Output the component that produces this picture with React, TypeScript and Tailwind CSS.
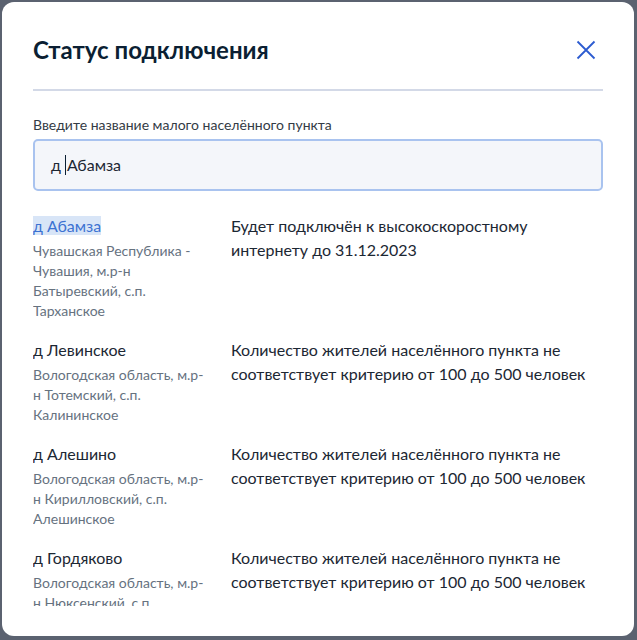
import React from "react";

const rows = [
  {
    name: "д Абамза",
    region: "Чувашская Республика - Чувашия, м.р-н Батыревский, с.п. Тарханское",
    status: "Будет подключён к высокоскоростному интернету до 31.12.2023",
    active: true,
  },
  {
    name: "д Левинское",
    region: "Вологодская область, м.р-н Тотемский, с.п. Калининское",
    status: "Количество жителей населённого пункта не соответствует критерию от 100 до 500 человек",
  },
  {
    name: "д Алешино",
    region: "Вологодская область, м.р-н Кирилловский, с.п. Алешинское",
    status: "Количество жителей населённого пункта не соответствует критерию от 100 до 500 человек",
  },
  {
    name: "д Гордяково",
    region: "Вологодская область, м.р-н Нюксенский, с.п. Нюксенское",
    status: "Количество жителей населённого пункта не соответствует критерию от 100 до 500 человек",
  },
];

export default function App() {
  return (
    <div
      className="w-[637px] h-[640px] bg-[#5b6270] p-[2px] pr-[3px] pb-[4px]"
      style={{ fontFamily: "Lato, 'Noto Sans', sans-serif" }}
    >
      <div className="w-full h-full bg-white rounded-[12px] px-[31px] pt-[32px] pb-[30px] flex flex-col">
        <div className="flex items-center justify-between h-[32px]">
          <h1 className="text-[24px] leading-[32px] font-bold text-[#0b1f33]">Статус подключения</h1>
          <svg width="20" height="20" viewBox="0 0 20 20" className="mr-[7px]">
            <path d="M1.5 1.5 L18.5 18.5 M18.5 1.5 L1.5 18.5" stroke="#2c5bd0" strokeWidth="1.8" fill="none" />
          </svg>
        </div>
        <div className="h-[2px] bg-[#d3d9e7] mt-[23px]" />
        <label className="mt-[24px] text-[14px] leading-[20px] text-[#333b45]">
          Введите название малого населённого пункта
        </label>
        <div className="mt-[4px] h-[52px] rounded-[5px] border-2 border-[#a9c3ef] bg-[#f4f6fa] flex items-center px-[16px] text-[16px] text-[#1c2733]">
          <span>д</span>
          <span className="inline-block w-[1px] h-[20px] bg-[#0b1f33] ml-[4px] mr-[1px]" />
          <span>Абамза</span>
        </div>
        <div className="mt-[23px] flex-1 overflow-hidden flex flex-col gap-[17px]">
          {rows.map((r) => (
            <div key={r.name} className="flex gap-[22px]">
              <div className="w-[176px] shrink-0">
                <div className="text-[16px] leading-[24px]">
                  <span
                    className={
                      r.active ? "text-[#3c72d2] bg-[#d8e5f7]" : "text-[#1c2733]"
                    }
                  >
                    {r.name}
                  </span>
                </div>
                <div className="mt-[3px] text-[14px] leading-[20px] text-[#66727f]">{r.region}</div>
              </div>
              <div className="flex-1 text-[16px] leading-[24px] text-[#1c2733]">{r.status}</div>
            </div>
          ))}
        </div>
      </div>
    </div>
  );
}
